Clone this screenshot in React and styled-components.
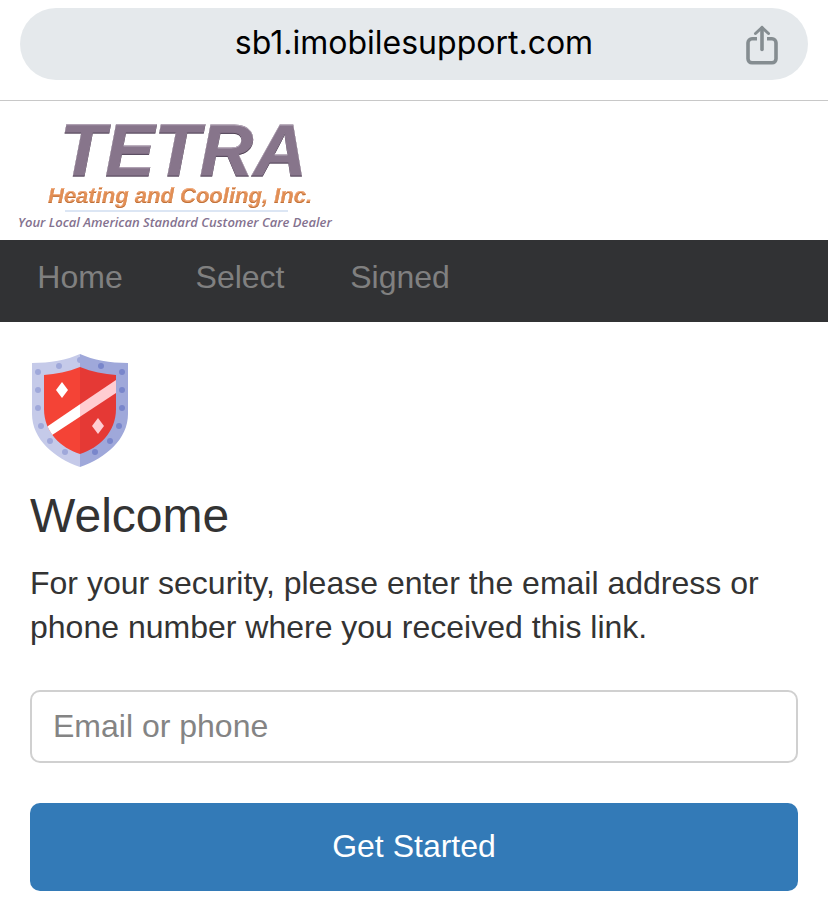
import React, { useState } from "react"
import styled, { createGlobalStyle } from "styled-components"

const GlobalStyle = createGlobalStyle`
  *,
  *::before,
  *::after {
    box-sizing: border-box;
  }
  body {
    margin: 0;
    background: #fff;
    color: #333;
    font-family: "Liberation Sans", Helvetica, Arial, sans-serif;
    font-size: 32px;
    line-height: 44px;
  }
`

const BrowserBar = styled.div`
  padding: 8px 20px 20px;
  border-bottom: 1px solid #c8c8c8;
`

const AddressPill = styled.div`
  display: grid;
  grid-template-columns: 32px 1fr 32px;
  align-items: start;
  height: 72px;
  padding: 13px 30px 0;
  border-radius: 36px;
  background: #e5e9ec;
`

const Address = styled.span`
  grid-column: 2;
  color: #000;
  font-family: Inter, sans-serif;
  text-align: center;
`

const ShareButton = styled.button`
  display: flex;
  padding: 4px 0 0;
  border: 0;
  background: none;
  color: #858d91;
`

const Header = styled.header`
  padding: 3px 10px 4px;

  a,
  svg {
    display: block;
    width: max-content;
  }
`

const Navbar = styled.nav`
  display: flex;
  height: 82px;
  padding-top: 15px;
  background: #313234;
`

const NavLink = styled.a`
  width: 160px;
  color: #808080;
  text-align: center;
  text-decoration: none;
`

const Main = styled.main`
  padding: 32px 30px 22px;
`

const Title = styled.h1`
  margin: 20px 0 17px;
  font-size: 48px;
  font-weight: 400;
  line-height: 56px;
`

const Message = styled.p`
  margin: 0 0 41px;
`

const Form = styled.form`
  display: flex;
  flex-direction: column;
  gap: 40px;

  input,
  button {
    width: 100%;
    border-radius: 10px;
    font-family: inherit;
    font-size: 32px;
  }
`

const Input = styled.input`
  height: 73px;
  padding: 0 21px;
  border: 2px solid #d0d0d0;
  background: #fff;
  color: #333;

  &::placeholder {
    color: #848484;
    opacity: 1;
  }
`

const Button = styled.button`
  height: 88px;
  padding: 0 0 2px;
  border: 0;
  background: #337ab7;
  color: #fff;
`

const ShareIcon = () => (
  <svg
    width="32"
    height="40"
    viewBox="0 0 32 40"
    fill="none"
    stroke="currentColor"
    strokeWidth="3.6"
    aria-hidden="true"
  >
    <path d="M11 13.8H6a4 4 0 0 0-4 4v16a4 4 0 0 0 4 4h20a4 4 0 0 0 4-4v-16a4 4 0 0 0-4-4h-5" />
    <path d="M16 3v21.5" strokeLinecap="round" />
    <path d="M9.5 8.5L16 2.5l6.500 6" strokeWidth="3" strokeLinecap="round" />
  </svg>
)

const Bevel = ({ id, depth, light, dark }) => (
  <filter id={id} x="-5%" y="-10%" width="110%" height="125%">
    <feOffset in="SourceAlpha" dx="0" dy={depth} result="down" />
    <feOffset in="SourceAlpha" dx={-depth / 2} dy={-depth} result="up" />
    <feFlood floodColor={light} />
    <feComposite in2="SourceAlpha" operator="in" />
    <feComposite in2="down" operator="out" result="highlight" />
    <feFlood floodColor={dark} />
    <feComposite in2="SourceAlpha" operator="in" />
    <feComposite in2="up" operator="out" result="shade" />
    <feMerge>
      <feMergeNode in="SourceGraphic" />
      <feMergeNode in="highlight" />
      <feMergeNode in="shade" />
    </feMerge>
  </filter>
)

const Logo = () => (
  <svg
    width="340"
    height="132"
    viewBox="10 104 340 132"
    role="img"
    aria-label="TETRA Heating and Cooling, Inc."
  >
    <defs>
      <Bevel id="bevel-large" depth={1} light="#b3a5b6" dark="#4f4254" />
      <Bevel id="bevel-small" depth={1} light="#f3b084" dark="#bd7038" />
    </defs>
    <g
      fontFamily="Liberation Sans, Arial, sans-serif"
      fontStyle="italic"
      fontWeight="700"
    >
      <text
        x="60"
        y="176"
        fontSize="74"
        fill="#87758b"
        stroke="#87758b"
        strokeWidth="1"
        filter="url(#bevel-large)"
      >
        TETRA
      </text>
      <text
        x="48"
        y="203"
        fontSize="22"
        fill="#e38f55"
        filter="url(#bevel-small)"
      >
        Heating and Cooling, Inc.
      </text>
    </g>
    <path d="M65 211H288" stroke="#dce6f4" strokeWidth="2" />
    <text
      x="18"
      y="227"
      fontFamily="Open Sans, sans-serif"
      fontSize="13"
      fontStyle="italic"
      fontWeight="600"
      fill="#84728f"
    >
      Your Local American Standard Customer Care Dealer
    </text>
  </svg>
)

const ShieldSvg = styled.svg`
  display: block;
  margin-left: 2px;
`

const RIVETS_LEFT = [
  [27, 12],
  [6, 18],
  [6, 36],
  [6, 54],
  [9, 72],
  [18, 87],
  [33, 98],
]

const Shield = () => (
  <ShieldSvg width="96" height="114" viewBox="0 0 96 114" aria-hidden="true">
    <defs>
      <clipPath id="left-half">
        <path d="M0 0h48v114H0z" />
      </clipPath>
      <clipPath id="right-half">
        <path d="M48 0h48v114H48z" />
      </clipPath>
      <clipPath id="field">
        <path d="M48 13C36 18 24 20 12 21v34c0 23 17 39 36 45 19-6 36-22 36-45V21C72 20 60 18 48 13z" />
      </clipPath>
    </defs>
    <path d="M48 0C35 6 18 9 0 9v51c0 25 22 44 48 53z" fill="#c5cae9" />
    <path d="M48 0c13 6 30 9 48 9v51c0 25-22 44-48 53z" fill="#9fa8da" />
    {RIVETS_LEFT.map(([x, y]) => (
      <React.Fragment key={`${x}-${y}`}>
        <circle cx={x} cy={y} r="3" fill="#9fa8da" />
        <circle cx={96 - x} cy={y} r="3" fill="#7986cb" />
      </React.Fragment>
    ))}
    <circle cx="48" cy="6" r="3" fill="#9fa8da" clipPath="url(#left-half)" />
    <g clipPath="url(#field)">
      <path d="M0 0h48v114H0z" fill="#f44336" />
      <path d="M48 0h48v114H48z" fill="#e53935" />
      <path
        d="M10 76L90 22v13L14 85z"
        fill="#fff"
        clipPath="url(#left-half)"
      />
      <path
        d="M10 76L90 22v13L14 85z"
        fill="#ffcdd2"
        clipPath="url(#right-half)"
      />
    </g>
    <path d="M30 28l6 8-6 8-6-8z" fill="#fff" />
    <path d="M66 64l6 8-6 8-6-8z" fill="#ffcdd2" />
  </ShieldSvg>
)

const App = () => {
  const [contact, setContact] = useState("")

  const handleOnSubmit = e => {
    e.preventDefault()
  }

  return (
    <React.Fragment>
      <GlobalStyle />
      <BrowserBar>
        <AddressPill>
          <Address>sb1.imobilesupport.com</Address>
          <ShareButton type="button" aria-label="Share">
            <ShareIcon />
          </ShareButton>
        </AddressPill>
      </BrowserBar>
      <Header>
        <a href="#home">
          <Logo />
        </a>
      </Header>
      <Navbar>
        <NavLink href="#home">Home</NavLink>
        <NavLink href="#select">Select</NavLink>
        <NavLink href="#signed">Signed</NavLink>
      </Navbar>
      <Main>
        <Shield />
        <Title>Welcome</Title>
        <Message>
          For your security, please enter the email address or phone number
          where you received this link.
        </Message>
        <Form onSubmit={handleOnSubmit}>
          <Input
            type="text"
            name="contact"
            aria-label="Email or phone"
            placeholder="Email or phone"
            value={contact}
            onChange={e => setContact(e.target.value)}
          />
          <Button type="submit">Get Started</Button>
        </Form>
      </Main>
    </React.Fragment>
  )
}

export default App
